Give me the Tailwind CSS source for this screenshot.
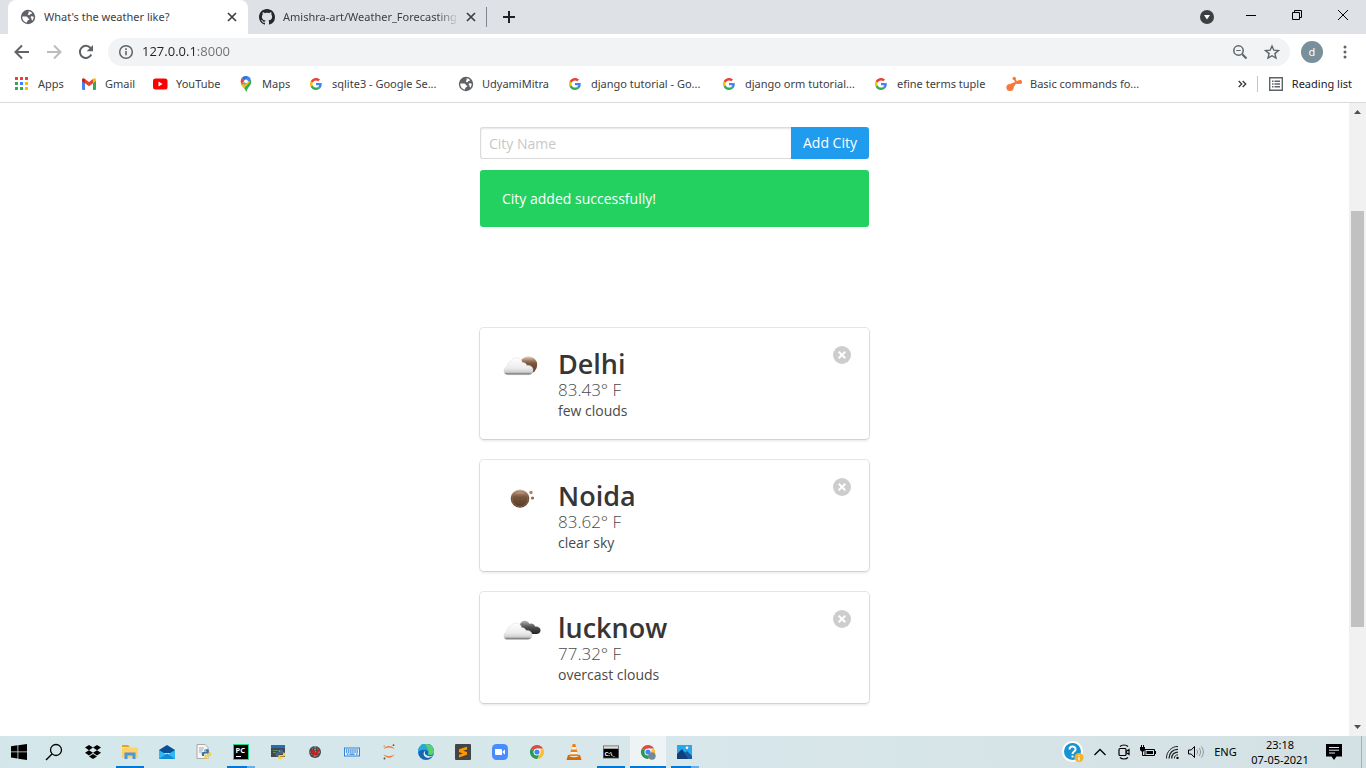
<!DOCTYPE html>
<html lang="en">
<head>
<meta charset="utf-8">
<title>What's the weather like?</title>
<script src="https://cdn.jsdelivr.net/npm/@tailwindcss/browser@4"></script>
</head>
<body class="flex h-screen flex-col overflow-hidden bg-white font-['Noto_Sans','Open_Sans',sans-serif] text-[11px] text-[#3c4043]">

<svg class="absolute size-0" aria-hidden="true">
  <symbol id="globe" viewBox="0 0 16 16"><circle cx="8" cy="8" r="7.200" fill="#5f6368"/><path fill="#fff" d="M2.300 7.500h3.500c1.300 0 1.900.6 2 1.400.3.600 1.300.5 1.500 1.100.2.800-.5 1-1.300 1.300-.8.400-.6 1.200-1.300 2.400C4 13 2 10.500 2.300 7.500zM8.500 2.200c1.300.1 2.600.8 3.400 1.600.2.800-.3 1.200-1.200 1.300-.7.200-.6.900-1.300 1.100-.7.100-1.400-.2-1.600-.9-.1-.8.700-.8.900-1.400zM10.800 7.700c.8-.6 1.900-.5 2.900.1 0 1.400-.5 2.700-1.300 3.700-.8-.1-.9-1-.8-1.800-.5-.4-1.300-1.300-.8-2z"/></symbol>
  <symbol id="google" viewBox="0 0 48 48"><path fill="#EA4335" d="M24 9.500c3.540 0 6.710 1.220 9.210 3.600l6.850-6.850C35.900 2.380 30.470 0 24 0 14.620 0 6.510 5.380 2.560 13.220l7.980 6.190C12.430 13.720 17.740 9.500 24 9.500z"/><path fill="#4285F4" d="M46.980 24.550c0-1.570-.15-3.090-.38-4.550H24v9.020h12.940c-.58 2.960-2.260 5.480-4.780 7.180l7.730 6c4.510-4.180 7.090-10.360 7.090-17.650z"/><path fill="#FBBC05" d="M10.530 28.590a14.500 14.500 0 0 1 0-9.180l-7.980-6.190a24 24 0 0 0 0 21.560z"/><path fill="#34A853" d="M24 48c6.480 0 11.930-2.130 15.890-5.810l-7.730-6c-2.150 1.450-4.920 2.300-8.160 2.300-6.260 0-11.570-4.220-13.470-9.910l-7.980 6.190C6.510 42.620 14.620 48 24 48z"/></symbol>
  <symbol id="x" viewBox="0 0 10 10"><path d="M1 1l8 8M9 1L1 9" fill="none" stroke="currentColor" stroke-width="1.700"/></symbol>
  <symbol id="del" viewBox="0 0 18 18"><circle cx="9" cy="9" r="9" fill="#cdcdcd"/><path d="M5.700 5.700l6.600 6.600M12.300 5.700l-6.600 6.600" stroke="#fff" stroke-width="2"/></symbol>
  <symbol id="chrome" viewBox="0 0 16 16"><path fill="#dd4b3e" d="M8 8L1.900 4.500A7 7 0 0 1 14.100 4.500H8z"/><path fill="#fbc02d" d="M8 8l6.100-3.500A7 7 0 0 1 8 15l3.200-5.300z"/><path fill="#279b56" d="M8 8l3 1.800L8 15A7 7 0 0 1 1.900 4.500z"/><circle cx="8" cy="8" r="3.500" fill="#fff"/><circle cx="8" cy="8" r="2.600" fill="#4285f4"/></symbol>
  <symbol id="python" viewBox="0 0 16 16"><path fill="#3574a8" d="M8 1C5 1 4.800 2.200 4.800 3v1.500H8.200v.6H3.200C1.600 5.100 1 6.500 1 8s.7 3 2 3h1.400V9.200c0-1.300 1-2 2.200-2h3.200c1 0 1.600-.7 1.600-1.700V3c0-1.300-1.200-2-3.400-2z"/><path fill="#fdd03b" d="M8 15c3 0 3.200-1.200 3.200-2v-1.500H7.800v-.6h5C14.400 10.900 15 9.500 15 8s-.7-3-2-3h-1.200v1.800c0 1.300-1 2-2.200 2H6.400c-1 0-1.600.7-1.600 1.700V13c0 1.300 1 2 3.200 2z"/><circle cx="6.300" cy="2.900" r=".7" fill="#fff"/><circle cx="9.700" cy="13.100" r=".7" fill="#fff"/></symbol>
  <linearGradient id="cloudFill" x1="0" y1="0" x2="0" y2="1"><stop offset="0" stop-color="#fff"/><stop offset=".6" stop-color="#ececec"/><stop offset=".85" stop-color="#cfcfcf"/><stop offset="1" stop-color="#555"/></linearGradient>
  <linearGradient id="sunFill" x1="0" y1="0" x2="0" y2="1"><stop offset="0" stop-color="#ead8cb"/><stop offset=".25" stop-color="#a07a60"/><stop offset=".4" stop-color="#7a573e"/><stop offset="1" stop-color="#54392a"/></linearGradient>
  <linearGradient id="darkFill" x1="0" y1="0" x2="0" y2="1"><stop offset="0" stop-color="#b5b5b5"/><stop offset=".45" stop-color="#555"/><stop offset="1" stop-color="#222"/></linearGradient>
  <symbol id="cloud" viewBox="0 0 32 20"><path fill="url(#cloudFill)" stroke="#ddd" stroke-width=".5" d="M4.500 18.500C1.500 18.500.7 16 1 13.500c.2-1.800 1.600-2.900 3-3C4 7 6 4.800 8 4.500 9.500 2 11.500 1 14 1c3.500 0 5.500 2.500 6 5 2-.4 4 .8 4.600 3 3.600-.5 6.400 1.500 6.400 4.500s-1.500 5-4.500 5z"/></symbol>
</svg>

<!-- Tab strip -->
<header class="flex h-[34px] shrink-0 bg-[#dee1e6] pl-2">
  <div role="tablist" class="flex">
    <div class="flex w-[240px] items-center rounded-t-lg bg-white pr-[11px] pl-3">
      <button role="tab" aria-selected="true" class="flex flex-1 items-center gap-2"><svg class="size-4"><use href="#globe"/></svg>What's the weather like?</button>
      <button aria-label="Close tab"><svg class="size-[10px]"><use href="#x"/></svg></button>
    </div>
    <div class="flex w-[238px] items-center pr-[10px] pl-[11px]">
      <button role="tab" aria-selected="false" class="flex min-w-0 flex-1 items-center gap-2"><svg class="size-4 shrink-0" viewBox="0 0 16 16"><path fill="#24292e" d="M8 0C3.580 0 0 3.580 0 8c0 3.540 2.290 6.530 5.470 7.590.4.070.55-.17.55-.38 0-.19-.01-.82-.01-1.490-2.010.37-2.530-.49-2.690-.94-.09-.23-.48-.94-.82-1.130-.28-.15-.68-.52-.01-.53.63-.01 1.080.58 1.230.82.720 1.210 1.870.87 2.330.66.070-.52.280-.87.510-1.070-1.780-.2-3.640-.89-3.640-3.950 0-.87.310-1.590.820-2.150-.08-.2-.36-1.020.08-2.120 0 0 .67-.21 2.200.82.640-.18 1.320-.27 2-.27s1.360.09 2 .27c1.530-1.040 2.200-.82 2.200-.82.440 1.100.160 1.920.080 2.120.510.560.820 1.270.820 2.150 0 3.070-1.870 3.750-3.650 3.950.290.250.540.730.540 1.480 0 1.070-.01 1.930-.01 2.200 0 .210.150.460.550.380A8.010 8.010 0 0 0 16 8c0-4.420-3.580-8-8-8z"/></svg><span class="w-[176px] overflow-hidden text-left whitespace-nowrap [mask-image:linear-gradient(90deg,#000_154px,transparent_176px)]">Amishra-art/Weather_Forecasting</span></button>
      <button aria-label="Close tab" class="ml-[7px]"><svg class="size-[10px]"><use href="#x"/></svg></button>
    </div>
  </div>
  <div class="mt-[7px] h-5 w-px bg-[#80868b]"></div>
  <button aria-label="New tab" class="ml-4"><svg class="size-3" viewBox="0 0 12 12"><path d="M6 0v12M0 6h12" stroke="#202124" stroke-width="2"/></svg></button>
  <div class="ml-auto flex pb-[5px]">
    <button aria-label="Search tabs" class="mr-[14px] pt-1"><svg class="size-[14px]" viewBox="0 0 14 14"><circle cx="7" cy="7" r="7" fill="#3c4043"/><path d="M4 5h6L7 9.500z" fill="#fff"/></svg></button>
    <button aria-label="Minimize" class="flex w-[46px] items-center justify-center"><svg class="h-[10px] w-[10px]" viewBox="0 0 10 10"><path d="M0 5.500h10" stroke="#000"/></svg></button>
    <button aria-label="Restore" class="flex w-[46px] items-center justify-center"><svg class="size-[10px]" viewBox="0 0 10 10"><path d="M.5 2.500h7v7h-7zM2.500 2.500v-2h7v7h-2" fill="none" stroke="#000"/></svg></button>
    <button aria-label="Close" class="flex w-[46px] items-center justify-center"><svg class="size-[10px]" viewBox="0 0 10 10"><path d="M0 0l10 10M10 0L0 10" stroke="#000"/></svg></button>
  </div>
</header>

<!-- Address bar -->
<nav class="flex h-9 shrink-0 items-center pl-[14px]">
  <button aria-label="Back" class="mr-4"><svg class="size-4" viewBox="0 0 16 16"><path d="M15 8H2M8 1.500L1.500 8 8 14.500" fill="none" stroke="#5f6368" stroke-width="2"/></svg></button>
  <button aria-label="Forward" class="mr-4"><svg class="size-4" viewBox="0 0 16 16"><path d="M1 8h13M8 1.500L14.500 8 8 14.500" fill="none" stroke="#babcbe" stroke-width="2"/></svg></button>
  <button aria-label="Reload" class="mr-[14px]"><svg class="size-4" viewBox="0 0 16 16"><path d="M13.300 10.500A6 6 0 1 1 12.500 4" fill="none" stroke="#5f6368" stroke-width="2"/><path d="M15 1v6.300H8.700z" fill="#5f6368"/></svg></button>
  <div class="flex h-7 flex-1 items-center rounded-full bg-[#f1f3f4] pr-[10px] pl-[10px]">
    <button aria-label="Site information"><svg class="size-4" viewBox="0 0 16 16"><circle cx="8" cy="8" r="6.300" fill="none" stroke="#5f6368" stroke-width="1.500"/><path d="M8 7v4.300M8 4.300v1.600" stroke="#5f6368" stroke-width="1.600"/></svg></button>
    <input type="text" aria-label="Address" value="127.0.0.1:8000" class="ml-2 min-w-0 flex-1 bg-[linear-gradient(90deg,#202124_54px,#6b6f73_54px)] bg-clip-text font-['Open_Sans',sans-serif] text-[13px] text-transparent outline-none">
    <button aria-label="Zoom" class="mr-4"><svg class="size-4" viewBox="0 0 16 16"><path d="M10.200 10.200l4.300 4.300" stroke="#5f6368" stroke-width="2"/><circle cx="6.500" cy="6.500" r="4.700" fill="none" stroke="#5f6368" stroke-width="1.500"/><path d="M4.300 6.500h4.400" stroke="#5f6368"/></svg></button>
    <button aria-label="Bookmark this page"><svg class="size-4" viewBox="0 0 16 16"><path d="M8 2l1.800 4.200 4.600.4-3.500 3 1.100 4.500L8 11.700l-4 2.400 1.100-4.500-3.500-3 4.600-.4z" fill="none" stroke="#5f6368" stroke-width="1.400"/></svg></button>
  </div>
  <button aria-label="Profile" class="ml-[11px] flex size-[22px] items-center justify-center rounded-full bg-[#78909c] text-[11px] text-white">d</button>
  <button aria-label="Menu" class="mr-[13px] ml-[14px]"><svg class="h-4 w-4" viewBox="0 0 16 16"><g fill="#5f6368"><circle cx="8" cy="3" r="1.500"/><circle cx="8" cy="8" r="1.500"/><circle cx="8" cy="13" r="1.500"/></g></svg></button>
</nav>

<!-- Bookmarks -->
<nav aria-label="Bookmarks" class="flex h-[33px] shrink-0 items-center border-b border-[#d9dadc] pb-1 pl-[14px] whitespace-nowrap">
  <a href="#" class="flex w-[67px] items-center gap-2"><svg class="size-4" viewBox="0 0 16 16"><path fill="#ea4335" d="M1 1h3v3H1zM6 1h3v3H6zM11 1h3v3h-3z"/><path fill="#34a853" d="M1 6h3v3H1zM1 11h3v3H1z"/><path fill="#4285f4" d="M6 6h3v3H6z"/><path fill="#fbbc05" d="M11 6h3v3h-3zM11 11h3v3h-3z"/><path fill="#34a853" d="M6 11h3v3H6z"/></svg>Apps</a>
  <a href="#" class="flex w-[71px] items-center gap-2"><svg class="size-4" viewBox="0 0 16 16"><path fill="#4285f4" d="M1 4l3 2.300V14H2a1 1 0 0 1-1-1z"/><path fill="#34a853" d="M12 6.300L15 4v9a1 1 0 0 1-1 1h-2z"/><path fill="#ea4335" d="M4 3l4 3 4-3v4.300l-4 3-4-3z"/><path fill="#c5221f" d="M1 4c0-2 2-2 3-1v4.300L1 5z"/><path fill="#fbbc04" d="M15 4c0-2-2-2-3-1v4.300L15 5z"/></svg>Gmail</a>
  <a href="#" class="flex w-[86px] items-center gap-2"><svg class="size-4" viewBox="0 0 16 16"><rect x="1" y="2.500" width="14.500" height="11" rx="2.500" fill="#f00"/><path d="M6.500 5.500v5L10.500 8z" fill="#fff"/></svg>YouTube</a>
  <a href="#" class="flex w-[70px] items-center gap-2"><svg class="size-4" viewBox="0 0 16 16"><path fill="#34a853" d="M3 8l8-5 2 1c.8 3-.3 4.700-2 6.700-1.200 1.500-1.800 2.500-2.200 4.300-.2.700-.8.700-1 0C7.300 12.500 4.500 11 3 8z"/><path fill="#fbbc04" d="M3.500 9l7-5 1.500 2-6 6.500z"/><path fill="#4285f4" d="M8 0c2 0 4 1 4.800 3.200L6 9z"/><path fill="#1a73e8" d="M8 0C6 0 4.500.8 3.700 2l3 2.600L9.600 0z"/><path fill="#ea4335" d="M3.700 2C2.300 4 2.500 6 3.300 8L7 4.600z"/><circle cx="8" cy="5.300" r="1.900" fill="#fff"/></svg>Maps</a>
  <a href="#" class="flex w-[150px] items-center gap-2"><svg class="size-4 p-0.5"><use href="#google"/></svg>sqlite3 - Google Se...</a>
  <a href="#" class="flex w-[109px] items-center gap-2"><svg class="size-4"><use href="#globe"/></svg>UdyamiMitra</a>
  <a href="#" class="flex w-[154px] items-center gap-2"><svg class="size-4 p-0.5"><use href="#google"/></svg>django tutorial - Go...</a>
  <a href="#" class="flex w-[152px] items-center gap-2"><svg class="size-4 p-0.5"><use href="#google"/></svg>django orm tutorial...</a>
  <a href="#" class="flex w-[133px] items-center gap-2"><svg class="size-4 p-0.5"><use href="#google"/></svg>efine terms tuple</a>
  <a href="#" class="flex items-center gap-2"><svg class="size-4" viewBox="0 0 16 16"><g fill="#f6793b"><circle cx="4" cy="11.500" r="3.600"/><circle cx="14" cy="6" r="2.100"/><circle cx="8.200" cy="2.500" r="1.700"/><path d="M4 8l5-2 1-.5L13.500 4v4L10 7.800 7 12z"/><path d="M7.500 3l1.400-1 2.500 4-1.800 1z"/></g></svg>Basic commands fo...</a>
  <button aria-label="More bookmarks" class="mr-[10px] ml-auto"><svg class="h-2 w-[9px]" viewBox="0 0 9 8"><path d="M.7 1l3 3-3 3M4.700 1l3 3-3 3" fill="none" stroke="#3c4043" stroke-width="1.400"/></svg></button>
  <div class="h-4 w-px bg-[#c4c7ca]"></div>
  <button class="mr-[14px] ml-[10px] flex items-center gap-2 text-[#202124]"><svg class="size-4" viewBox="0 0 16 16"><path d="M1.700 1.700h12.600v12.600H1.700z" fill="none" stroke="#5f6368" stroke-width="1.400"/><path d="M4 5.200h1.500M4 8h1.500M4 10.800h1.500M6.500 5.200H12M6.500 8H12M6.500 10.800H12" stroke="#5f6368" stroke-width="1.400"/></svg>Reading list</button>
</nav>

<!-- Page -->
<div class="flex min-h-0 flex-1">
  <main class="flex-1 overflow-hidden pt-6 font-['Open_Sans','Noto_Sans',sans-serif] text-[14px] leading-[22px] text-[#4a4a4a]">
    <div class="mx-auto w-full max-w-[389px]">
      <form class="flex h-8">
        <input type="text" aria-label="City Name" placeholder="City Name" class="min-w-0 flex-1 rounded-l-[3px] border border-r-0 border-[#dbdbdb] px-2 pt-0.5 shadow-[inset_0_1px_2px_rgba(10,10,10,0.1)] outline-none placeholder:text-[#c8c8c8]">
        <button type="button" class="w-[78px] rounded-r-[3px] bg-[#209cee] text-white">Add City</button>
      </form>
      <div role="status" class="mt-[11px] rounded-[3px] bg-[#23d160] px-[22px] py-[18px] leading-[21px] text-white">City added successfully!</div>

      <section class="mt-[101px] flex flex-col gap-[21px]">
        <article class="flex h-[111px] items-start rounded-[4px] px-[18px] pt-[18px] shadow-[0_2px_3px_rgba(10,10,10,0.1),0_0_0_1px_rgba(10,10,10,0.1)]">
          <svg class="h-[45px] w-[45px] shrink-0" viewBox="0 0 45 45" role="img" aria-label="few clouds"><circle cx="30.500" cy="19" r="8.700" fill="url(#sunFill)"/><use href="#cloud" x="5" y="10.500" width="31" height="20"/></svg>
          <div class="ml-[15px] flex-1">
            <h2 class="text-[27px] leading-9 font-semibold text-[#363636]">Delhi</h2>
            <p class="text-[17px] leading-4 font-light">83.43° F</p>
            <p class="mt-0.5">few clouds</p>
          </div>
          <button aria-label="Remove Delhi"><svg class="size-[18px]"><use href="#del"/></svg></button>
        </article>
        <article class="flex h-[111px] items-start rounded-[4px] px-[18px] pt-[18px] shadow-[0_2px_3px_rgba(10,10,10,0.1),0_0_0_1px_rgba(10,10,10,0.1)]">
          <svg class="h-[45px] w-[45px] shrink-0" viewBox="0 0 45 45" role="img" aria-label="clear sky"><circle cx="22" cy="20.500" r="9.300" fill="url(#sunFill)"/><circle cx="22" cy="20.800" r="7.800" fill="none" stroke="#8b6950" stroke-width=".8"/><circle cx="33" cy="14.500" r="1.700" fill="#a78671"/><circle cx="34.500" cy="20" r="1.600" fill="#8b6a54"/></svg>
          <div class="ml-[15px] flex-1">
            <h2 class="text-[27px] leading-9 font-semibold text-[#363636]">Noida</h2>
            <p class="text-[17px] leading-4 font-light">83.62° F</p>
            <p class="mt-0.5">clear sky</p>
          </div>
          <button aria-label="Remove Noida"><svg class="size-[18px]"><use href="#del"/></svg></button>
        </article>
        <article class="flex h-[111px] items-start rounded-[4px] px-[18px] pt-[18px] shadow-[0_2px_3px_rgba(10,10,10,0.1),0_0_0_1px_rgba(10,10,10,0.1)]">
          <svg class="h-[45px] w-[45px] shrink-0" viewBox="0 0 45 45" role="img" aria-label="overcast clouds"><path fill="url(#darkFill)" d="M22 18c-1-6 3-8 6-7 2 .5 3 1.500 3.500 3 2-1 5 0 5.500 2.500 4 0 6 2 5.500 4.500-.5 2-2 3-4 3H28z"/><use href="#cloud" x="5" y="11.500" width="30" height="20"/></svg>
          <div class="ml-[15px] flex-1">
            <h2 class="text-[27px] leading-9 font-semibold text-[#363636]">lucknow</h2>
            <p class="text-[17px] leading-4 font-light">77.32° F</p>
            <p class="mt-0.5">overcast clouds</p>
          </div>
          <button aria-label="Remove lucknow"><svg class="size-[18px]"><use href="#del"/></svg></button>
        </article>
      </section>
    </div>
  </main>
  <div aria-hidden="true" class="flex w-[17px] flex-col items-center bg-[#f1f1f1]">
    <svg class="h-[17px] w-[17px] shrink-0" viewBox="0 0 17 17"><path d="M5 11l3.500-4 3.500 4z" fill="#505050"/></svg>
    <div class="flex-[91]"></div>
    <div class="w-[13px] flex-[416] bg-[#c1c1c1]"></div>
    <div class="flex-[92]"></div>
    <svg class="h-[17px] w-[17px] shrink-0" viewBox="0 0 17 17"><path d="M5 6l3.500 4L12 6z" fill="#505050"/></svg>
  </div>
</div>

<!-- Taskbar -->
<footer class="flex h-8 shrink-0 bg-linear-to-r from-[#d3e7ea] via-[#d8e7eb] to-[#d4e1e4] text-black">
  <div class="flex [&>button]:flex [&>button]:w-[37px] [&>button]:items-center [&>button]:justify-center">
    <button aria-label="Start"><svg class="size-4" viewBox="0 0 16 16"><path d="M0 2.200l6.500-.9v6.200H0zM7.300 1.200L16 0v7.500H7.300zM0 8.300h6.500v6.200L0 13.600zM7.300 8.300H16V16l-8.700-1.300z"/></svg></button>
    <button aria-label="Search" class="pr-1"><svg class="size-[18px]" viewBox="0 0 18 18"><circle cx="11" cy="7" r="5.500" fill="none" stroke="#000" stroke-width="1.300"/><path d="M7 11L1 17" stroke="#000" stroke-width="1.400"/></svg></button>
    <button aria-label="Dropbox"><svg class="h-[14px] w-4" viewBox="0 0 16 14"><path d="M4 0l4 2.600-4 2.600L0 2.600zM12 0l4 2.600-4 2.600-4-2.600zM4 5.200l4 2.600-4 2.600-4-2.600zM12 5.200l4 2.600-4 2.600-4-2.600zM8 8.900l4 2.500L8 14l-4-2.600z"/></svg></button>
    <button aria-label="File Explorer" class="relative"><svg class="size-4" viewBox="0 0 16 16"><path fill="#e0a526" d="M0 1h6l2 2H0z"/><path fill="#fdd365" d="M0 3.500h16V14H0z"/><path fill="#4b96dd" d="M2.500 8.500h11V15h-3v-3.500h-5V15h-3z"/></svg><span class="absolute bottom-0 h-[2px] w-7 bg-[#0078d7]"></span></button>
    <button aria-label="Mail"><svg class="size-4" viewBox="0 0 16 16"><path fill="#0b4f94" d="M0 6l8-5 8 5v3H0z"/><path fill="#32b8f0" d="M0 6l8 5 8-5v9H0z"/><path fill="#128bd8" d="M8 9.500L0 15h16z"/></svg></button>
    <button aria-label="Python launcher"><svg class="size-4" viewBox="0 0 16 16"><path fill="#f6f6f6" stroke="#9a9a9a" stroke-width=".8" d="M1 .5h8l3 3v11H1z"/><path d="M3 4h5M3 6h4M3 8h3" stroke="#aaa"/><use href="#python" x="5" y="4" width="11" height="12"/></svg></button>
    <button aria-label="PyCharm" class="relative"><svg class="size-4" viewBox="0 0 16 16"><rect width="16" height="16" fill="#21d789"/><rect x="1" y="1" width="14" height="14"/><text x="2.500" y="8.500" font-size="7.500" font-weight="700" fill="#fff">PC</text><path d="M3 12.500h5" stroke="#fff"/></svg><span class="absolute bottom-0 flex h-[2px] w-7 bg-[#6aaee6]"><span class="w-5 bg-[#0078d7]"></span></span></button>
    <button aria-label="IDLE"><svg class="size-4" viewBox="0 0 16 16"><path fill="#484848" d="M1 1h14v12H1z"/><path fill="#1f70b8" d="M1 1h14v3H1z"/><path d="M3 6.500h5M3 8.500h3" stroke="#5b8f5b"/><use href="#python" x="5" y="5" width="11" height="11"/></svg></button>
    <button aria-label="Application"><svg class="size-4" viewBox="0 0 16 16"><circle cx="8" cy="8" r="6" fill="#4a4a4a"/><path d="M2 8h12M8 2v12" stroke="#bbb" stroke-dasharray="1.500 1.500"/><circle cx="8" cy="8" r="4" fill="none" stroke="#999" stroke-dasharray="1.500 1.500"/><path d="M2 8l3-2.200L8 8.500l5-3.500-2.500 5-2.500 1.500-3-3z" fill="#e31414"/></svg></button>
    <button aria-label="On-screen keyboard"><svg class="size-4" viewBox="0 0 16 16"><rect x=".5" y="4" width="15" height="8" fill="#e5f1fb" stroke="#2b82d9"/><path d="M2 6h12M2 8h12" stroke="#2b82d9" stroke-width="1.300" stroke-dasharray="1.300 .8"/><path d="M3 10.200h1.500M5.500 10.200h5M12 10.200h1.500" stroke="#2b82d9" stroke-width="1.200"/></svg></button>
    <button aria-label="Jupyter"><svg class="size-4" viewBox="0 0 16 16"><path fill="#f37626" d="M2.500 5C5 1 11 1 13.500 5 10 2.900 6 2.900 2.500 5zM2.500 10.500C5 14.700 11 14.700 13.500 10.500 10 12.700 6 12.700 2.500 10.500z"/><g fill="#555"><circle cx="12.500" cy="1.200" r=".9"/><circle cx="3.500" cy="14.500" r="1"/><circle cx="3.200" cy="2" r=".6"/></g></svg></button>
    <button aria-label="Microsoft Edge"><svg class="size-4" viewBox="0 0 16 16"><circle cx="8" cy="8" r="8" fill="#1268b5"/><path fill="#27a9d8" d="M0 7a8 8 0 0 1 16 .5C16 11 12 11.500 10 10.500c1-1.500.5-4-2-4.500C5 5.500 1 6 0 9z"/><path fill="#5bd16a" d="M7 0a8 8 0 0 1 9 8c0 3-4 3.500-6 2.500C12 7 9 4 7 0z"/><path fill="#e1edf1" d="M7.500 6.700c-1 1-1 3 .5 4.300s4 1.500 6.800.6C13 14 9 14.500 6.800 12.500 5 10.700 5.300 7.500 7.500 6.700z"/></svg></button>
    <button aria-label="Sublime Text"><svg class="size-4" viewBox="0 0 16 16"><rect width="16" height="16" rx="1" fill="#444"/><path fill="#ff9800" d="M4 5.300l8-2.500v2.700L8 6.800l4 1.300v2.700l-8 2.600v-2.700l4-1.300-4-1.300z"/></svg></button>
    <button aria-label="Zoom"><svg class="size-4" viewBox="0 0 16 16"><rect width="16" height="16" rx="4.500" fill="#4a8cff"/><path fill="#fff" d="M3 5h6a1 1 0 0 1 1 1v5H4a1 1 0 0 1-1-1zM10.700 7.200L13 5.500v5l-2.300-1.700z"/></svg></button>
    <button aria-label="Chrome"><svg class="size-4"><use href="#chrome"/></svg></button>
    <button aria-label="VLC"><svg class="size-4" viewBox="0 0 16 16"><path fill="#f08010" d="M6.700 0h2.600L12.500 12h-9z"/><path fill="#f5f5f5" d="M5.900 3h4.200l.7 2.500H5.200zM4.500 8h7l.6 2.200H3.900z"/><path fill="#d96800" d="M2 11h2l-.5 1.500c2 1 7 1 9 0L12 11h2l1.500 5H.5z"/></svg></button>
    <button aria-label="Command Prompt" class="relative"><svg class="size-4" viewBox="0 0 16 16"><rect y="1.500" width="16" height="13" fill="#666"/><rect x=".8" y="2.300" width="14.400" height="2.200" fill="#ddd"/><rect x=".8" y="5" width="14.400" height="8.700"/><text x="1.500" y="11.500" font-size="6" font-weight="700" fill="#fff">C:\_</text></svg><span class="absolute bottom-0 h-[2px] w-7 bg-[#0078d7]"></span></button>
    <button aria-label="Chrome window" class="relative border-l border-[#d8e7eb] bg-[#eef4f6]"><svg class="size-4" viewBox="0 0 16 16"><use href="#chrome" width="16" height="16"/><circle cx="12" cy="12" r="3.700" fill="#748a96"/></svg><span class="absolute bottom-0 h-[2px] w-9 bg-[#0078d7]"></span></button>
    <button aria-label="Photos" class="relative"><svg class="size-4" viewBox="0 0 16 16"><rect y="1" width="15" height="14" fill="#28a8ea"/><path fill="#103f7c" d="M0 10l5-5 7 10H0z"/><path fill="#1a5aa5" d="M7.500 9L10 7l5 5v3h-3.500z"/><circle cx="10" cy="3.800" r="1.300" fill="#fff"/></svg><span class="absolute bottom-0 flex h-[2px] w-7 bg-[#6aaee6]"><span class="w-5 bg-[#0078d7]"></span></span></button>
  </div>
  <div class="ml-auto flex items-center [&>button]:flex [&>button]:items-center [&>button]:justify-center">
    <button aria-label="Help" class="w-7"><svg class="size-[22px]" viewBox="0 0 22 22"><circle cx="10.500" cy="10.500" r="10.500" fill="#fff"/><circle cx="10.500" cy="10.500" r="8.500" fill="#1593d2"/><path d="M7.500 8.500c0-4 6.200-4 6 0 0 2-3 2-3 4.500M10.500 14.500v2" fill="none" stroke="#fff" stroke-width="2"/><circle cx="17" cy="16.500" r="4.500" fill="#f6b02c"/><path d="M17 14v1M17 16v3.500" stroke="#fff" stroke-width="1.300"/></svg></button>
    <button aria-label="Show hidden icons" class="w-[25px]"><svg class="h-2 w-3" viewBox="0 0 12 8"><path d="M.5 7L6 1.500 11.500 7" fill="none" stroke="#000" stroke-width="1.300"/></svg></button>
    <button aria-label="Meet Now" class="w-6"><svg class="size-4" viewBox="0 0 16 16"><g fill="none" stroke="#000" stroke-width="1.200"><rect x="3" y="4.500" width="7" height="7" rx="1"/><path d="M10 7.500l3-2v5l-3-2M4 2.500C6 .5 10 .5 12 2.500M4 13.500c2 2 6 2 8 0"/></g></svg></button>
    <button aria-label="Battery" class="w-6"><svg class="size-4" viewBox="0 0 16 16"><path d="M5 5.500h9.500v6H5z" fill="none" stroke="#000"/><path d="M6.500 7h6.500v3H6.500zM15 7h1v3h-1zM0 3h5v3L3.500 7.500h-2L0 6zM1 1h1v2H1zM3 1h1v2H3z"/><path d="M2.500 7v4.500H5" fill="none" stroke="#000"/></svg></button>
    <button aria-label="Network" class="w-6"><svg class="size-[14px]" viewBox="0 0 14 14"><g fill="none" stroke="#222"><path d="M1.500 13.500C1 7 7 1 13 1.500"/><path d="M4 13.500C4 8 8 4 13 4.300" stroke-width="1.300"/><path d="M6.700 13.500c0-4 2.600-6.400 6.300-6.400" stroke-width="1.300"/><path d="M9.300 13.500c0-2.200 1.500-3.700 3.700-3.700"/></g><circle cx="12.500" cy="13" r="1.200"/></svg></button>
    <button aria-label="Volume" class="w-6"><svg class="size-4" viewBox="0 0 16 16"><path d="M.5 6h2.700L6.500 2.500v11L3.200 10H.5z" fill="none" stroke="#000"/><g fill="none" stroke="#8a9699"><path d="M8.700 5.500c1.200 1.500 1.200 3.500 0 5"/><path d="M11 4c2 2.500 2 5.500 0 8"/><path d="M13.300 2.500c2.800 3.500 2.800 7.500 0 11"/></g></svg></button>
    <button aria-label="Input language" class="w-[35px]">ENG</button>
    <button aria-label="Date and time" class="w-[74px] text-center leading-[15px]"><time>23:18<br>07-05-2021</time></button>
    <button aria-label="Notifications" class="w-8 pl-0.5"><svg class="size-4" viewBox="0 0 16 16"><path d="M0 0h16v12.500h-5.500L8 16l-2.500-3.500H0z"/><path d="M3 3.500h10M3 6.200h10M3 9h6" stroke="#dce8ec"/></svg></button>
    <div class="mr-1 ml-3 h-8 w-px bg-[#9eb5bc]"></div>
  </div>
</footer>
</body>
</html>
